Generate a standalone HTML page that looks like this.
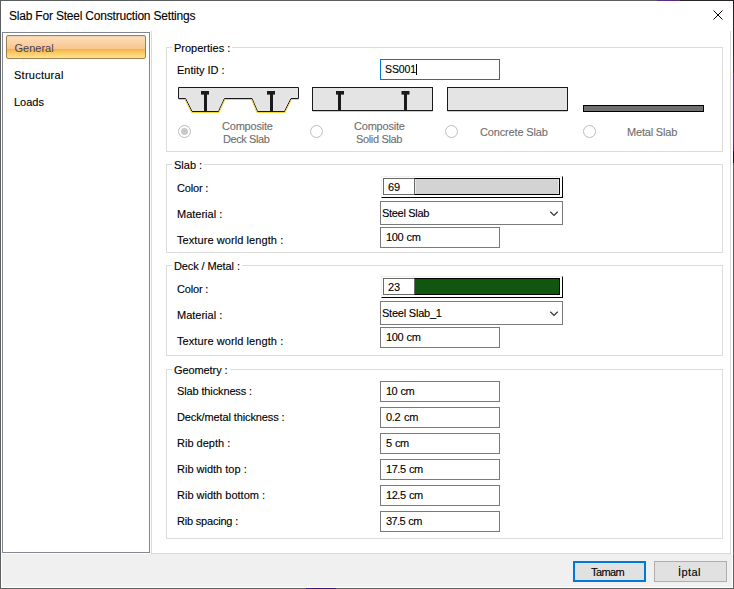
<!DOCTYPE html>
<html><head><meta charset="utf-8">
<style>
*{box-sizing:border-box;margin:0;padding:0}
html,body{width:734px;height:589px;overflow:hidden;background:#fff}
body{position:relative;font-family:"Liberation Sans",sans-serif;font-size:11px;color:#000}
.a{position:absolute}
.t{position:absolute;white-space:nowrap;line-height:13px;font-size:11px;-webkit-text-stroke:0.12px currentColor}
.lg{-webkit-text-stroke:0.12px currentColor}
.win{left:0;top:0;width:734px;height:589px;border:1px solid #5c5f60;background:#fff}
.foot{left:2px;top:554px;width:730px;height:33px;background:#f0f0f0}
.nav{left:2px;top:32px;width:148px;height:521px;border:1px solid #828790;background:#fff}
.gen{left:6px;top:35px;width:140px;height:24px;border:1px solid #a08050;border-radius:2px;
 background:linear-gradient(to bottom,#e6c9a8 0px,#fcdcb8 1px,#fbd7ae 4px,#f8c68a 13px,#f6af45 13px,#f9c45e 16px,#fde08a 21px,#fde590 22px)}
.page{left:151px;top:31px;width:580px;height:523px;border:1px solid #dadada;border-top:none;background:#fff}
.gb{position:absolute;border:1px solid #dcdcdc;background:transparent}
.lg{position:absolute;background:#fff;padding:0 2px 0 2px;line-height:13px;white-space:nowrap}
.tb{position:absolute;border:1px solid #7a7a7a;background:#fff;height:21px;width:120px;left:380px}
.cb{position:absolute;border:1px solid #7a7a7a;background:#fff;height:24px;width:183px;left:380px}
.dis{color:#6d6d6d;-webkit-text-stroke:0.1px #6d6d6d}
.radio{position:absolute;width:13px;height:13px;border:1px solid #bcbcbc;border-radius:50%;background:#fff}
.btn{position:absolute;top:561px;width:73px;height:21px;background:#e1e1e1;border:1px solid #adadad}
</style></head><body>
<div class="a win"></div>
<div class="a foot"></div>
<div class="a" style="left:657px;top:0;width:23px;height:1px;background:#5b2d86"></div>
<div class="a" style="left:680px;top:0;width:54px;height:1px;background:#2a2525"></div>
<div class="a" style="left:733px;top:0;width:1px;height:73px;background:linear-gradient(#1e1919,#353535)"></div>
<div class="a" style="left:733px;top:73px;width:1px;height:78px;background:#5b2d86"></div>
<div class="a" style="left:733px;top:151px;width:1px;height:12px;background:#151515"></div>
<div class="a" style="left:306px;top:588px;width:30px;height:1px;background:#3c1a7a"></div>
<div class="t" style="left:9px;top:9px;font-size:12px;line-height:14px;letter-spacing:-0.2px;-webkit-text-stroke:0.1px #000">Slab For Steel Construction Settings</div>
<svg class="a" style="left:712px;top:9px" width="12" height="12" viewBox="0 0 12 12"><path d="M1.5 1.5 L10.5 10.5 M10.5 1.5 L1.5 10.5" stroke="#000" stroke-width="1" fill="none"/></svg>

<div class="a nav"></div>
<div class="a gen"></div>
<div class="t" style="left:14.5px;top:42px;color:#46405c;-webkit-text-stroke:0">General</div>
<div class="t" style="left:14px;top:69px;letter-spacing:0.25px">Structural</div>
<div class="t" style="left:14px;top:96px">Loads</div>

<div class="a page"></div>

<!-- Properties -->
<div class="gb" style="left:166px;top:47px;width:557px;height:105px"></div>
<div class="lg" style="left:172px;top:42px">Properties :</div>
<div class="t" style="left:177px;top:64px">Entity ID :</div>
<div class="tb" style="top:59px;border-color:#0078d7"></div>
<div class="t" style="left:385px;top:63px;letter-spacing:-0.1px;font-size:10.5px">SS001</div>
<div class="a" style="left:416px;top:64px;width:1px;height:11px;background:#000"></div>

<svg class="a" style="left:176px;top:85px" width="130" height="30" viewBox="176 85 130 30">
 <path d="M178.5 87.5 H298.5 V98.5 H291 L284.5 111.5 H257.5 L252 98.5 H224.5 L218.5 111.5 H192 L185.5 98.5 H178.5 Z" fill="#e4e4e4" stroke="#1a1a1a" stroke-width="1"/>
 <path d="M178.5 99.5 H185 L191.5 112.5 H219 L225 99.5 H251.5 L257 112.5 H285 L291.5 99.5 H298.5" fill="none" stroke="#f2d33c" stroke-width="1"/>
 <rect x="201" y="91" width="8" height="3.6" fill="#1a1a1a"/><rect x="204" y="94" width="3" height="17" fill="#1a1a1a"/>
 <rect x="267" y="91" width="8" height="3.6" fill="#1a1a1a"/><rect x="270" y="94" width="3" height="17" fill="#1a1a1a"/>
</svg>
<svg class="a" style="left:310px;top:85px" width="130" height="30" viewBox="310 85 130 30">
 <rect x="312.5" y="87.5" width="120" height="23" fill="#e4e4e4" stroke="#1a1a1a"/>
 <path d="M312.5 111.5 H432.5" stroke="#f2d33c"/>
 <rect x="336" y="91" width="8" height="3.6" fill="#1a1a1a"/><rect x="338" y="94" width="3" height="16" fill="#1a1a1a"/>
 <rect x="401.5" y="91" width="8" height="3.6" fill="#1a1a1a"/><rect x="404" y="94" width="3" height="16" fill="#1a1a1a"/>
</svg>
<svg class="a" style="left:445px;top:85px" width="130" height="30" viewBox="445 85 130 30">
 <rect x="447.5" y="87.5" width="120" height="23" fill="#e4e4e4" stroke="#1a1a1a"/>
 <path d="M447.5 111.5 H567.5" stroke="#f2d33c"/>
</svg>
<svg class="a" style="left:580px;top:100px" width="130" height="15" viewBox="580 100 130 15">
 <rect x="583.5" y="105.5" width="120" height="6" fill="#707070" stroke="#000"/>
</svg>

<div class="radio" style="left:178px;top:125px"><div class="a" style="left:2px;top:2px;width:7px;height:7px;border-radius:50%;background:#c8c8c8"></div></div>
<div class="t dis" style="left:222px;top:120px;letter-spacing:-0.2px">Composite</div>
<div class="t dis" style="left:223px;top:133px;letter-spacing:-0.4px">Deck Slab</div>
<div class="radio" style="left:310px;top:125px"></div>
<div class="t dis" style="left:354px;top:120px;letter-spacing:-0.2px">Composite</div>
<div class="t dis" style="left:356px;top:133px;letter-spacing:-0.35px">Solid Slab</div>
<div class="radio" style="left:445px;top:125px"></div>
<div class="t dis" style="left:480px;top:126px;letter-spacing:-0.15px">Concrete Slab</div>
<div class="radio" style="left:583px;top:125px"></div>
<div class="t dis" style="left:627px;top:126px;letter-spacing:-0.18px">Metal Slab</div>

<!-- Slab -->
<div class="gb" style="left:166px;top:164px;width:557px;height:89px"></div>
<div class="lg" style="left:172px;top:159px">Slab :</div>
<div class="t" style="left:177px;top:182px;letter-spacing:-0.18px">Color :</div>
<div class="t" style="left:177px;top:208px">Material :</div>
<div class="t" style="left:177px;top:234px;letter-spacing:0.08px">Texture world length :</div>

<div class="a" style="left:381px;top:176px;width:182px;height:22px;border-left:1px solid #f0f0f0;border-top:1px solid #f0f0f0;border-right:1px solid #000;border-bottom:1px solid #000"></div>
<div class="a" style="left:383px;top:178px;width:32px;height:17px;border:1px solid #6a6a6a;background:#fff"></div>
<div class="t" style="left:388px;top:181px">69</div>
<div class="a" style="left:414px;top:178px;width:146px;height:17px;border:1px solid #000;border-left-color:#6a6a6a;background:#d3d3d3;box-shadow:inset 1px 0 0 #e8e8e8,inset -1px 0 0 #e8e8e8"></div>

<div class="cb" style="top:201px"></div>
<div class="t" style="left:382px;top:207px;letter-spacing:-0.3px">Steel Slab</div>
<svg class="a" style="left:548px;top:208px" width="12" height="10" viewBox="0 0 12 10"><path d="M2.3 3.8 L6 7.4 L9.7 3.8" stroke="#3a3a3a" stroke-width="1.3" fill="none"/></svg>
<div class="tb" style="top:227px"></div>
<div class="t" style="left:386px;top:231px;letter-spacing:-0.4px;word-spacing:0.8px">100 cm</div>

<!-- Deck -->
<div class="gb" style="left:166px;top:265px;width:557px;height:91px"></div>
<div class="lg" style="left:172px;top:260px;letter-spacing:-0.1px">Deck / Metal :</div>
<div class="t" style="left:177px;top:283px;letter-spacing:-0.18px">Color :</div>
<div class="t" style="left:177px;top:309px">Material :</div>
<div class="t" style="left:177px;top:335px;letter-spacing:0.08px">Texture world length :</div>

<div class="a" style="left:381px;top:276px;width:182px;height:22px;border-left:1px solid #f0f0f0;border-top:1px solid #f0f0f0;border-right:1px solid #000;border-bottom:1px solid #000"></div>
<div class="a" style="left:383px;top:278px;width:32px;height:17px;border:1px solid #6a6a6a;background:#fff"></div>
<div class="t" style="left:388px;top:281px">23</div>
<div class="a" style="left:414px;top:278px;width:146px;height:17px;border:1px solid #000;border-left-color:#6a6a6a;background:#10560f"></div>

<div class="cb" style="top:301px"></div>
<div class="t" style="left:382px;top:307px;letter-spacing:-0.22px">Steel Slab_1</div>
<svg class="a" style="left:548px;top:308px" width="12" height="10" viewBox="0 0 12 10"><path d="M2.3 3.8 L6 7.4 L9.7 3.8" stroke="#3a3a3a" stroke-width="1.3" fill="none"/></svg>
<div class="tb" style="top:327px"></div>
<div class="t" style="left:386px;top:331px;letter-spacing:-0.4px;word-spacing:0.8px">100 cm</div>

<!-- Geometry -->
<div class="gb" style="left:166px;top:369px;width:557px;height:170px"></div>
<div class="lg" style="left:172px;top:364px;letter-spacing:-0.09px">Geometry :</div>
<div class="t" style="left:177px;top:385px;letter-spacing:-0.13px">Slab thickness :</div>
<div class="t" style="left:177px;top:411px;letter-spacing:-0.12px">Deck/metal thickness :</div>
<div class="t" style="left:177px;top:437px">Rib depth :</div>
<div class="t" style="left:177px;top:463px">Rib width top :</div>
<div class="t" style="left:177px;top:489px">Rib width bottom :</div>
<div class="t" style="left:177px;top:515px;letter-spacing:-0.2px">Rib spacing :</div>
<div class="tb" style="top:381px"></div><div class="t" style="left:386px;top:385px;letter-spacing:-0.5px;word-spacing:0.8px">10 cm</div>
<div class="tb" style="top:407px"></div><div class="t" style="left:386px;top:411px;letter-spacing:-0.3px;word-spacing:0.8px">0.2 cm</div>
<div class="tb" style="top:433px"></div><div class="t" style="left:386px;top:437px;letter-spacing:-0.5px;word-spacing:0.8px">5 cm</div>
<div class="tb" style="top:459px"></div><div class="t" style="left:386px;top:463px;letter-spacing:-0.45px;word-spacing:0.8px">17.5 cm</div>
<div class="tb" style="top:485px"></div><div class="t" style="left:386px;top:489px;letter-spacing:-0.45px;word-spacing:0.8px">12.5 cm</div>
<div class="tb" style="top:511px"></div><div class="t" style="left:386px;top:515px;letter-spacing:-0.6px;word-spacing:0.8px">37.5 cm</div>

<!-- Buttons -->
<div class="btn" style="left:573px;border:2px solid #0078d7"></div>
<div class="t" style="left:591px;top:566px;letter-spacing:-0.6px">Tamam</div>
<div class="btn" style="left:654px"></div>
<div class="t" style="left:678px;top:566px;letter-spacing:0.4px">İptal</div>
</body></html>
